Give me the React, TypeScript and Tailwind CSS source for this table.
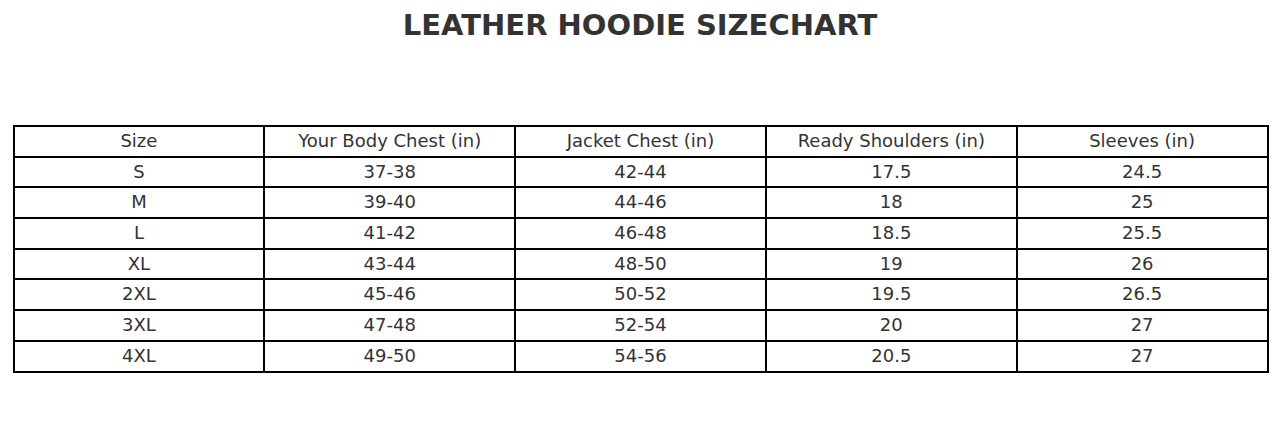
import React from 'react';

const headers = ['Size', 'Your Body Chest (in)', 'Jacket Chest (in)', 'Ready Shoulders (in)', 'Sleeves (in)'];

const rows = [
  ['S', '37-38', '42-44', '17.5', '24.5'],
  ['M', '39-40', '44-46', '18', '25'],
  ['L', '41-42', '46-48', '18.5', '25.5'],
  ['XL', '43-44', '48-50', '19', '26'],
  ['2XL', '45-46', '50-52', '19.5', '26.5'],
  ['3XL', '47-48', '52-54', '20', '27'],
  ['4XL', '49-50', '54-56', '20.5', '27'],
];

export default function App() {
  return (
    <div className="w-[1280px] h-[439px] bg-white text-[#333333] font-['DejaVu_Sans',sans-serif]">
      <h1 className="pt-[8px] text-center text-[29px] leading-[34px] font-bold">LEATHER HOODIE SIZECHART</h1>

      <div className="pt-[83px] pl-[12.5px]">
        <table className="w-[1256px] table-fixed border-collapse text-[18px]">
          <thead>
            <tr>
              {headers.map((h) => (
                <th key={h} className="h-[30.7px] border-2 border-black p-0 pb-[1px] font-normal text-center leading-none">
                  {h}
                </th>
              ))}
            </tr>
          </thead>
          <tbody>
            {rows.map((r) => (
              <tr key={r[0]}>
                {r.map((c, i) => (
                  <td key={i} className="h-[30.7px] border-2 border-black p-0 pb-[1px] text-center leading-none">
                    {c}
                  </td>
                ))}
              </tr>
            ))}
          </tbody>
        </table>
      </div>
    </div>
  );
}
